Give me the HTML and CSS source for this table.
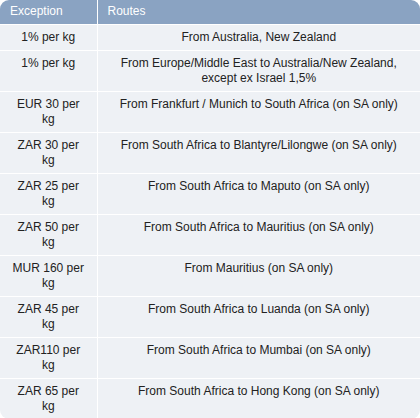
FILE: index.html
```html
<!DOCTYPE html>
<html>
<head>
<meta charset="utf-8">
<link rel="stylesheet" href="styles.css">
</head>
<body>
<div class="wrap">
<table class="rates">
<thead>
<tr><th class="c1">Exception</th><th class="c2">Routes</th></tr>
</thead>
<tbody>
<tr><td>1% per kg</td><td>From Australia, New Zealand</td></tr>
<tr><td>1% per kg</td><td>From Europe/Middle East to Australia/New Zealand, except ex Israel 1,5%</td></tr>
<tr><td>EUR 30 per kg</td><td>From Frankfurt / Munich to South Africa (on SA only)</td></tr>
<tr><td>ZAR 30 per kg</td><td>From South Africa to Blantyre/Lilongwe (on SA only)</td></tr>
<tr><td>ZAR 25 per kg</td><td>From South Africa to Maputo (on SA only)</td></tr>
<tr><td>ZAR 50 per kg</td><td>From South Africa to Mauritius (on SA only)</td></tr>
<tr><td>MUR 160 per kg</td><td>From Mauritius (on SA only)</td></tr>
<tr><td>ZAR 45 per kg</td><td>From South Africa to Luanda (on SA only)</td></tr>
<tr><td>ZAR110 per kg</td><td>From South Africa to Mumbai (on SA only)</td></tr>
<tr><td>ZAR 65 per kg</td><td>From South Africa to Hong Kong (on SA only)</td></tr>
</tbody>
</table>
</div>
</body>
</html>
```
FILE: styles.css
```css
html, body {
  margin: 0;
  padding: 0;
  background: #ffffff;
}
.wrap {
  width: 420px;
  border-radius: 9px;
  overflow: hidden;
}
.rates {
  width: 420px;
  border-collapse: collapse;
  table-layout: fixed;
  font-family: "Liberation Sans", Arial, sans-serif;
  font-size: 12px;
  line-height: 15px;
  color: #222222;
}
.rates th {
  background: #8aa3c2;
  color: #ffffff;
  font-weight: normal;
  text-align: left;
  height: 24px;
  padding: 0 10px;
  box-sizing: border-box;
  border-right: 1px solid #ffffff;
  border-bottom: 1px solid #ffffff;
}
.rates th.c1 { width: 97px; }
.rates th:last-child,
.rates td:last-child { border-right: none; }
.rates td {
  background: #eef1f5;
  text-align: center;
  vertical-align: top;
  padding: 5px 10px;
  border-right: 1px solid #ffffff;
  border-bottom: 1px solid #ffffff;
}
.rates tr:last-child td { border-bottom: none; }
```
